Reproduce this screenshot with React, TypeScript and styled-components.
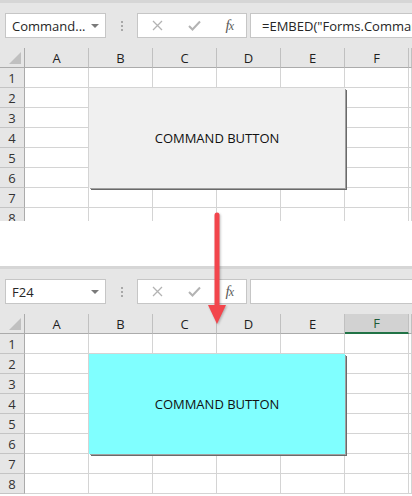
import styled, { createGlobalStyle } from 'styled-components';

const GlobalStyle = createGlobalStyle`
  html, body {
    margin: 0;
    padding: 0;
    background: #ffffff;
  }
  body {
    font-family: "Open Sans", "Noto Sans", sans-serif;
  }
`;

const COLUMNS = ['A', 'B', 'C', 'D', 'E', 'F', ''];
const ROWS = [1, 2, 3, 4, 5, 6, 7, 8];

type SheetProps = {
  name: string;
  formula: string;
  height: number;
  selectedCol?: string;
  buttonColor: string;
};

function Sheet({ name, formula, height, selectedCol, buttonColor }: SheetProps) {
  return (
    <Panel $height={height}>
      <Toolbar>
        <NameBox>
          <NameText>{name}</NameText>
          <DropArrow />
        </NameBox>
        <Grip>
          <Dot />
          <Dot />
          <Dot />
        </Grip>
        <FuncBox>
          <svg width="11" height="11" viewBox="0 0 11 11">
            <path d="M1 1 L10 10 M10 1 L1 10" stroke="#b3b3b3" strokeWidth="1.3" fill="none" />
          </svg>
          <svg width="13" height="11" viewBox="0 0 13 11">
            <path d="M1 6 L4.5 9.5 L12 1.5" stroke="#b3b3b3" strokeWidth="2" fill="none" />
          </svg>
          <FxText>
            f<small>x</small>
          </FxText>
        </FuncBox>
        <FormulaBox>{formula}</FormulaBox>
      </Toolbar>
      <Grid>
        <Corner>
          <svg width="14" height="14" viewBox="0 0 14 14">
            <path d="M13 1 L13 13 L1 13 Z" fill="#c0c0c0" />
          </svg>
        </Corner>
        {COLUMNS.map((c, i) => (
          <ColHeader key={i} $selected={c !== '' && c === selectedCol}>
            {c}
          </ColHeader>
        ))}
        {ROWS.map((r) => [
          <RowHeader key={`h${r}`} $row={r + 1}>
            {r}
          </RowHeader>,
          ...COLUMNS.map((_, i) => <Cell key={`${r}-${i}`} $row={r + 1} $col={i + 2} />),
        ])}
        <CommandButton $bg={buttonColor}>COMMAND BUTTON</CommandButton>
      </Grid>
    </Panel>
  );
}

export default function App() {
  return (
    <Page>
      <GlobalStyle />
      <Sheet
        name="Command..."
        formula={'=EMBED("Forms.CommandButton.1","")'}
        height={221}
        buttonColor="#f0f0f0"
      />
      <Spacer />
      <Sheet name="F24" formula="" height={230} selectedCol="F" buttonColor="#80ffff" />
      <Arrow width="22" height="118" viewBox="0 0 22 118">
        <path d="M11 4 L11 98" stroke="#f2454c" strokeWidth="5" strokeLinecap="round" />
        <path d="M2 94 L20 94 L11 113 Z" fill="#f2454c" />
      </Arrow>
    </Page>
  );
}

const Page = styled.div`
  position: relative;
  width: 412px;
  height: 496px;
  overflow: hidden;
  display: flex;
  flex-direction: column;
`;

const Panel = styled.div<{ $height: number }>`
  height: ${(p) => p.$height}px;
  overflow: hidden;
  flex-shrink: 0;
  display: flex;
  flex-direction: column;
`;

const Spacer = styled.div`
  height: 45px;
  flex-shrink: 0;
  background: #ffffff;
`;

const Toolbar = styled.div`
  box-sizing: border-box;
  height: 48px;
  flex-shrink: 0;
  display: flex;
  align-items: center;
  padding-left: 5px;
  background: #e6e6e6;
  border-top: 3px solid #d6d6d6;
`;

const NameBox = styled.div`
  box-sizing: border-box;
  width: 101px;
  height: 25px;
  background: #ffffff;
  border: 1px solid #c6c6c6;
  display: flex;
  align-items: center;
  justify-content: space-between;
  padding: 0 6px 0 6px;
  flex-shrink: 0;
`;

const NameText = styled.span`
  font-size: 13px;
  color: #262626;
  white-space: nowrap;
`;

const DropArrow = styled.span`
  width: 0;
  height: 0;
  border-left: 4px solid transparent;
  border-right: 4px solid transparent;
  border-top: 4px solid #7a7a7a;
`;

const Grip = styled.div`
  width: 31px;
  flex-shrink: 0;
  display: flex;
  flex-direction: column;
  align-items: center;
  gap: 2px;
`;

const Dot = styled.span`
  width: 2px;
  height: 2px;
  background: #a8a8a8;
`;

const FuncBox = styled.div`
  box-sizing: border-box;
  width: 110px;
  height: 25px;
  flex-shrink: 0;
  background: #ffffff;
  border: 1px solid #c6c6c6;
  display: flex;
  align-items: center;
  justify-content: space-between;
  padding: 0 13px 0 14px;
`;

const FxText = styled.span`
  font-family: "Liberation Serif", serif;
  font-style: italic;
  font-size: 15px;
  color: #5a5a5a;
  letter-spacing: -1px;

  small {
    font-size: 12px;
  }
`;

const FormulaBox = styled.div`
  box-sizing: border-box;
  margin-left: 3px;
  flex: 1;
  min-width: 0;
  height: 25px;
  background: #ffffff;
  border: 1px solid #c6c6c6;
  border-right: none;
  padding-left: 11px;
  display: flex;
  align-items: center;
  font-size: 13px;
  color: #262626;
  white-space: nowrap;
  overflow: hidden;
`;

const Grid = styled.div`
  display: grid;
  grid-template-columns: 25px repeat(6, 64px) 1fr;
  grid-auto-rows: 20px;
  background: #ffffff;
`;

const Corner = styled.div`
  box-sizing: border-box;
  grid-row: 1;
  grid-column: 1;
  background: #e6e6e6;
  border-right: 1px solid #ababab;
  border-bottom: 1px solid #ababab;
  display: flex;
  align-items: flex-end;
  justify-content: flex-end;
  padding: 0 2px 2px 0;
`;

const ColHeader = styled.div<{ $selected: boolean }>`
  box-sizing: border-box;
  grid-row: 1;
  background: ${(p) => (p.$selected ? '#d2d2d2' : '#e6e6e6')};
  border-right: 1px solid #c0c0c0;
  border-bottom: ${(p) => (p.$selected ? '2px solid #217346' : '1px solid #ababab')};
  color: ${(p) => (p.$selected ? '#1e5c3a' : '#1f1f1f')};
  font-size: 13px;
  display: flex;
  align-items: center;
  justify-content: center;
`;

const RowHeader = styled.div<{ $row: number }>`
  box-sizing: border-box;
  grid-row: ${(p) => p.$row};
  grid-column: 1;
  background: #e6e6e6;
  border-right: 1px solid #ababab;
  border-bottom: 1px solid #c4c4c4;
  color: #333333;
  font-size: 13px;
  display: flex;
  align-items: center;
  justify-content: center;
`;

const Cell = styled.div<{ $row: number; $col: number }>`
  box-sizing: border-box;
  grid-row: ${(p) => p.$row};
  grid-column: ${(p) => p.$col};
  border-right: 1px solid #d4d4d4;
  border-bottom: 1px solid #d4d4d4;
`;

const CommandButton = styled.div<{ $bg: string }>`
  grid-column: 3 / 7;
  grid-row: 3 / 8;
  position: relative;
  z-index: 1;
  background: ${(p) => p.$bg};
  box-shadow: 1px 1px 0 #a0a0a0, 2px 2px 0 #6a6a6a;
  display: flex;
  align-items: center;
  justify-content: center;
  font-family: "Open Sans", sans-serif;
  font-size: 13px;
  color: #111111;
`;

const Arrow = styled.svg`
  position: absolute;
  left: 206px;
  top: 211px;
  filter: drop-shadow(1px 1px 1px rgba(0, 0, 0, 0.25));
  z-index: 5;
`;
